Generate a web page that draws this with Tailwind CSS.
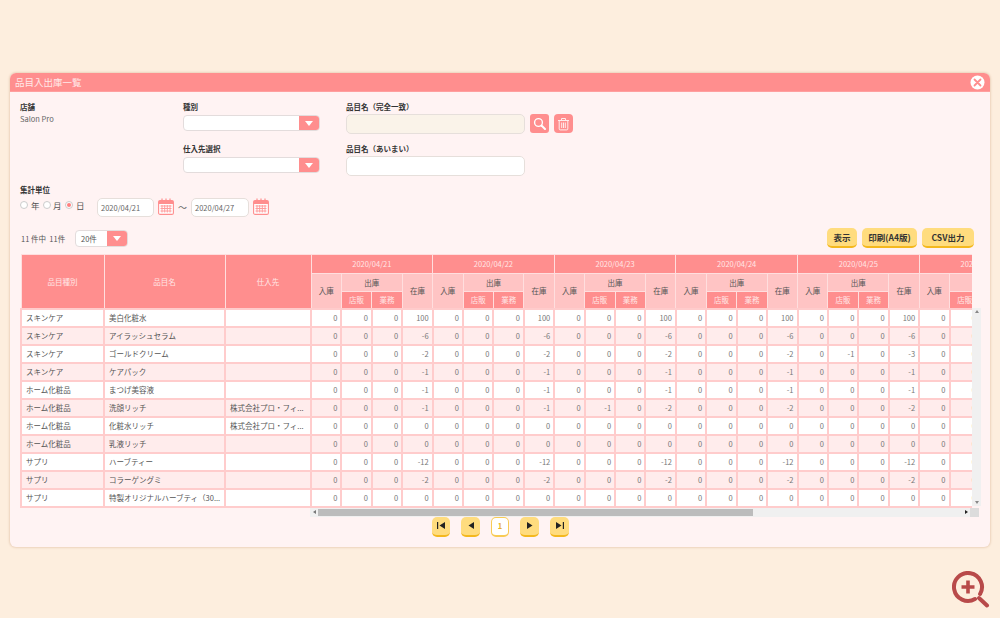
<!DOCTYPE html>
<html lang="ja">
<head>
    <meta charset="UTF-8">
    <title>品目入出庫一覧</title>
    <script src="https://cdn.jsdelivr.net/npm/@tailwindcss/browser@4"></script>
</head>
<body class="bg-[#fdeede] font-['Noto_Sans_CJK_JP','Noto_Sans',sans-serif] text-[7.5px] text-[#555] w-[1000px] h-[618px] overflow-hidden relative">

<div class="pt-[73px] px-[10px]">
    <!-- panel -->
    <div class="h-[474px] bg-[#fff3f3] rounded-[6px] overflow-hidden shadow-[0_0_2px_1px_#ecd3bd]">
        <div class="h-[19px] bg-[#ff8e8e] flex items-center justify-between pl-[5px] pr-[5px] border-b border-[#ff9f9f]">
            <span class="text-[9.5px] text-[#ffe9e9]">品目入出庫一覧</span>
            <svg width="15" height="15" viewBox="0 0 15 15"><circle cx="7.5" cy="7.5" r="7" fill="#fff"/><path d="M4.5 4.5l6 6M10.5 4.5l-6 6" stroke="#ff8e8e" stroke-width="1.8" stroke-linecap="round"/></svg>
        </div>

        <div class="pl-[10px] pr-[16px]">
            <!-- search form -->
            <div class="flex pt-[10px]">
                <div class="w-[163px]">
                    <div class="h-[10px] leading-[10px] font-bold text-[#333]">店舗</div>
                    <div class="mt-[2px] h-[10px] leading-[10px] text-[#666]">Salon Pro</div>
                </div>
                <div class="w-[163px]">
                    <div class="h-[10px] leading-[10px] font-bold text-[#333]">種別</div>
                    <div class="mt-[3px] w-[137px] h-[16px] flex bg-white rounded-[4px] border border-[#e3dcdc] overflow-hidden">
                        <div class="flex-1"></div>
                        <div class="w-[20px] bg-[#ff8e8e] flex items-center justify-center"><div class="w-0 h-0 border-x-[4px] border-x-transparent border-t-[5px] border-t-white"></div></div>
                    </div>
                    <div class="mt-[13px] h-[10px] leading-[10px] font-bold text-[#333]">仕入先選択</div>
                    <div class="mt-[3px] w-[137px] h-[16px] flex bg-white rounded-[4px] border border-[#e3dcdc] overflow-hidden">
                        <div class="flex-1"></div>
                        <div class="w-[20px] bg-[#ff8e8e] flex items-center justify-center"><div class="w-0 h-0 border-x-[4px] border-x-transparent border-t-[5px] border-t-white"></div></div>
                    </div>
                </div>
                <div>
                    <div class="h-[10px] leading-[10px] font-bold text-[#333]">品目名（完全一致）</div>
                    <div class="mt-[2px] flex gap-[5px]">
                        <div class="w-[179px] h-[20px] bg-[#faf3e9] rounded-[5px] border border-[#e6dfdb]"></div>
                        <div class="w-[19px] h-[19px] bg-[#ff8e8e] rounded-[3px] flex items-center justify-center">
                            <svg width="13" height="13" viewBox="0 0 13 13" fill="none" stroke="#fff"><circle cx="5.5" cy="5.5" r="3.9" stroke-width="1.4"/><path d="M8.5 8.5l3.5 3.5" stroke-width="2" stroke-linecap="round"/></svg>
                        </div>
                        <div class="w-[19px] h-[19px] bg-[#ff8e8e] rounded-[4px] flex items-center justify-center">
                            <svg width="13" height="14" viewBox="0 0 13 14" fill="none" stroke="#ffecec"><path d="M1 3.5h11" stroke-width="1.2"/><path d="M4.5 3.5V1.5h4v2" stroke-width="1"/><path d="M2.2 3.5v8.4a1 1 0 0 0 1 1h6.6a1 1 0 0 0 1-1V3.5" stroke-width="1"/><path d="M4.7 5.5v5.5M6.5 5.5v5.5M8.3 5.5v5.5" stroke-width="1"/></svg>
                        </div>
                    </div>
                    <div class="mt-[10px] h-[10px] leading-[10px] font-bold text-[#333]">品目名（あいまい）</div>
                    <div class="mt-[2px] w-[179px] h-[20px] bg-white rounded-[5px] border border-[#e6dfdb]"></div>
                </div>
            </div>

            <!-- period -->
            <div class="mt-[9px] h-[10px] leading-[10px] font-bold text-[#333]">集計単位</div>
            <div class="mt-[3px] flex items-start h-[19px]">
                <div class="flex items-center w-[77px] h-[14px] text-[8.5px] text-[#555]">
                    <span class="w-[8px] h-[8px] rounded-full bg-white border border-[#ccc]"></span><span class="ml-[3px] w-[12px]">年</span>
                    <span class="w-[8px] h-[8px] rounded-full bg-white border border-[#ccc]"></span><span class="ml-[2px] w-[12px]">月</span>
                    <span class="w-[8px] h-[8px] rounded-full bg-white border border-[#ccc] flex items-center justify-center"><span class="w-[4px] h-[4px] rounded-full bg-[#ff7f7f]"></span></span><span class="ml-[3px]">日</span>
                </div>
                <div class="w-[57px] h-[19px] bg-white rounded-[5px] border border-[#e6dfdb] pl-[3px] leading-[18px] text-[#666]">2020/04/21</div>
                <svg class="ml-[4px]" width="16" height="17" viewBox="0 0 16 17" fill="none"><rect x="0.6" y="2.6" width="14.8" height="13.8" rx="1.5" fill="#fff" stroke="#ff8e8e" stroke-width="1.1"/><path d="M0.6 4a1.5 1.5 0 0 1 1.5-1.5h11.8A1.5 1.5 0 0 1 15.4 4v2H.6z" fill="#ff8e8e"/><path d="M4 .6v3M8 .6v3M12 .6v3" stroke="#ff8e8e" stroke-width="1.2"/><path d="M2.5 8h11M2.5 10.5h11M2.5 13h11M4 7v7.5M6.7 7v7.5M9.3 7v7.5M12 7v7.5" stroke="#ff9d9d" stroke-width="1"/></svg>
                <span class="w-[17px] h-[19px] leading-[19px] text-center text-[9px] text-[#666]">～</span>
                <div class="w-[58px] h-[19px] bg-white rounded-[5px] border border-[#e6dfdb] pl-[3px] leading-[18px] text-[#666]">2020/04/27</div>
                <svg class="ml-[4px]" width="16" height="17" viewBox="0 0 16 17" fill="none"><rect x="0.6" y="2.6" width="14.8" height="13.8" rx="1.5" fill="#fff" stroke="#ff8e8e" stroke-width="1.1"/><path d="M0.6 4a1.5 1.5 0 0 1 1.5-1.5h11.8A1.5 1.5 0 0 1 15.4 4v2H.6z" fill="#ff8e8e"/><path d="M4 .6v3M8 .6v3M12 .6v3" stroke="#ff8e8e" stroke-width="1.2"/><path d="M2.5 8h11M2.5 10.5h11M2.5 13h11M4 7v7.5M6.7 7v7.5M9.3 7v7.5M12 7v7.5" stroke="#ff9d9d" stroke-width="1"/></svg>
            </div>

            <!-- toolbar -->
            <div class="mt-[11px] h-[20px] flex items-center justify-between">
                <div class="flex items-center pl-[1px] pt-[1px]">
                    <span class="w-[54px] text-[#555]">11 件中&nbsp;&nbsp;11件</span>
                    <div class="w-[53px] h-[17px] flex bg-white rounded-[4px] border border-[#e3dcdc] overflow-hidden">
                        <span class="flex-1 pl-[5px] leading-[16px] text-[#555]">20件</span>
                        <div class="w-[20px] bg-[#ff8e8e] flex items-center justify-center"><div class="w-0 h-0 border-x-[4px] border-x-transparent border-t-[5px] border-t-white"></div></div>
                    </div>
                </div>
                <div class="flex gap-[5px] text-[8.5px] font-bold text-[#333] leading-[18px] text-center">
                    <button class="w-[30px] h-[20px] bg-[#ffdc7e] rounded-[5px] border-b-2 border-[#f4b81e]">表示</button>
                    <button class="w-[55px] h-[20px] bg-[#ffdc7e] rounded-[5px] border-b-2 border-[#f4b81e]">印刷(A4版)</button>
                    <button class="w-[52px] h-[20px] bg-[#ffdc7e] rounded-[5px] border-b-2 border-[#f4b81e]">CSV出力</button>
                </div>
            </div>

            <!-- table -->
            <div class="mt-[6px] flex items-start">
                <table class="w-[290px] table-fixed border-collapse shrink-0">
                    <colgroup><col class="w-[83px]"><col class="w-[121px]"><col class="w-[86px]"></colgroup>
                    <thead>
                        <tr class="h-[54px] bg-[#ff8e8e] text-[#ffe6e6]">
                            <th class="font-normal border border-[#ffdede]">品目種別</th>
                            <th class="font-normal border border-[#ffdede]">品目名</th>
                            <th class="font-normal border border-[#ffdede]">仕入先</th>
                        </tr>
                    </thead>
                    <tbody id="fixed-body"></tbody>
                </table>
                <div class="w-[662px] -ml-[2px] overflow-hidden shrink-0">
                    <table class="w-[732px] table-fixed border-collapse">
                        <thead id="data-head"></thead>
                        <tbody id="data-body"></tbody>
                    </table>
                </div>
                <div class="mt-[54px] w-[9px] h-[198px] bg-[#f0f0f0] shrink-0 flex flex-col justify-between items-center py-[2px]">
                    <div class="w-0 h-0 border-x-[2px] border-x-transparent border-b-[3px] border-b-[#888]"></div>
                    <div class="w-0 h-0 border-x-[2px] border-x-transparent border-t-[3px] border-t-[#888]"></div>
                </div>
            </div>
            <div class="ml-[290px] w-[669px] h-[9px] flex bg-[#f0f0f0]">
                <div class="w-[8px] flex items-center justify-center"><div class="w-0 h-0 border-y-[2px] border-y-transparent border-r-[3px] border-r-[#777]"></div></div>
                <div class="w-[435px] bg-[#bcbcbc] my-[1px]"></div>
                <div class="flex-1 flex items-center justify-end pr-[2px]"><div class="w-0 h-0 border-y-[2px] border-y-transparent border-l-[3px] border-l-[#222]"></div></div>
                <div class="w-[9px] bg-[#dcdcdc]"></div>
            </div>

            <!-- pager -->
            <div class="ml-[412px] flex gap-[11px]">
                <button class="w-[18px] h-[20px] bg-[#ffdc7e] rounded-[5px] border-b-2 border-[#f4b81e] flex items-center justify-center">
                    <svg width="8" height="7" viewBox="0 0 8 7"><path d="M0 0h1.2v7H0zM8 0v7L2.5 3.5z" fill="#222"/></svg>
                </button>
                <button class="w-[19px] h-[20px] bg-[#ffdc7e] rounded-[5px] border-b-2 border-[#f4b81e] flex items-center justify-center">
                    <svg width="6" height="7" viewBox="0 0 6 7"><path d="M6 0v7L.5 3.5z" fill="#222"/></svg>
                </button>
                <button class="w-[18px] h-[20px] bg-white rounded-[5px] border border-b-2 border-[#f8cb55] text-[#e8b02a] font-bold">1</button>
                <button class="w-[19px] h-[20px] bg-[#ffdc7e] rounded-[5px] border-b-2 border-[#f4b81e] flex items-center justify-center">
                    <svg width="6" height="7" viewBox="0 0 6 7"><path d="M0 0v7l5.5-3.5z" fill="#222"/></svg>
                </button>
                <button class="w-[19px] h-[20px] bg-[#ffdc7e] rounded-[5px] border-b-2 border-[#f4b81e] flex items-center justify-center">
                    <svg width="8" height="7" viewBox="0 0 8 7"><path d="M8 0H6.8v7H8zM0 0v7l5.5-3.5z" fill="#222"/></svg>
                </button>
            </div>
        </div>
    </div>
</div>

<!-- zoom badge -->
<svg class="absolute left-[952px] top-[571px]" width="38" height="37" viewBox="0 0 38 37" fill="none" stroke="#b84a4a">
    <path d="M28.1 23A14 14 0 1 0 23 28.1" stroke-width="4" stroke-linecap="round"/>
    <path d="M27 27l8 7.5" stroke-width="4" stroke-linecap="round"/>
    <path d="M9.5 16h13M16 9.5v13" stroke-width="3.6"/>
</svg>

<script>
    const items = [
        ["スキンケア", "美白化粧水", "", [[100,0],[100,0],[100,0],[100,0],[100,0]]],
        ["スキンケア", "アイラッシュセラム", "", [[-6,0],[-6,0],[-6,0],[-6,0],[-6,0]]],
        ["スキンケア", "ゴールドクリーム", "", [[-2,0],[-2,0],[-2,0],[-2,0],[-3,-1]]],
        ["スキンケア", "ケアパック", "", [[-1,0],[-1,0],[-1,0],[-1,0],[-1,0]]],
        ["ホーム化粧品", "まつげ美容液", "", [[-1,0],[-1,0],[-1,0],[-1,0],[-1,0]]],
        ["ホーム化粧品", "洗顔リッチ", "株式会社プロ・フィ...", [[-1,0],[-1,0],[-2,-1],[-2,0],[-2,0]]],
        ["ホーム化粧品", "化粧水リッチ", "株式会社プロ・フィ...", [[0,0],[0,0],[0,0],[0,0],[0,0]]],
        ["ホーム化粧品", "乳液リッチ", "", [[0,0],[0,0],[0,0],[0,0],[0,0]]],
        ["サプリ", "ハーブティー", "", [[-12,0],[-12,0],[-12,0],[-12,0],[-12,0]]],
        ["サプリ", "コラーゲングミ", "", [[-2,0],[-2,0],[-2,0],[-2,0],[-2,0]]],
        ["サプリ", "特製オリジナルハーブティ（30...", "", [[0,0],[0,0],[0,0],[0,0],[0,0]]],
    ];
    const dates = ["2020/04/21", "2020/04/22", "2020/04/23", "2020/04/24", "2020/04/25", "2020/04/26"];

    const headBorder = "border border-[#ffdede]";
    let row1 = "", row2 = "", row3 = "";
    dates.forEach((d) => {
        row1 += `<th colspan="4" class="font-normal bg-[#ff8e8e] text-[#ffe6e6] ${headBorder}">${d}</th>`;
        row2 += `<th rowspan="2" class="font-normal bg-[#ffc4c4] ${headBorder}">入庫</th>
                 <th colspan="2" class="font-normal bg-[#ffc4c4] ${headBorder}">出庫</th>
                 <th rowspan="2" class="font-normal bg-[#ffc4c4] ${headBorder}">在庫</th>`;
        row3 += `<th class="font-normal bg-[#ff8e8e] text-[#ffe6e6] ${headBorder}">店販</th>
                 <th class="font-normal bg-[#ff8e8e] text-[#ffe6e6] ${headBorder}">業務</th>`;
    });
    document.getElementById("data-head").innerHTML =
        `<tr class="h-[19px]">${row1}</tr><tr class="h-[18px]">${row2}</tr><tr class="h-[17px]">${row3}</tr>`;

    let fixedRows = "", dataRows = "";
    items.forEach((item, i) => {
        const bg = i % 2 ? "bg-[#ffecec]" : "bg-white";
        const cell = "border-2 border-[#ffcccc] px-[4px] whitespace-nowrap overflow-hidden";
        fixedRows += `<tr class="h-[18px] ${bg}"><td class="${cell}">${item[0]}</td><td class="${cell}">${item[1]}</td><td class="${cell}">${item[2]}</td></tr>`;
        let cells = "";
        const days = [...item[3], [0, 0]];
        days.forEach(([stock, shop]) => {
            [0, shop, 0, stock].forEach((v) => {
                cells += `<td class="border-2 border-[#ffcccc] pr-[3px] text-right text-[#777]">${v}</td>`;
            });
        });
        dataRows += `<tr class="h-[18px] ${bg}">${cells}</tr>`;
    });
    document.getElementById("fixed-body").innerHTML = fixedRows;
    document.getElementById("data-body").innerHTML = dataRows;
</script>
</body>
</html>
